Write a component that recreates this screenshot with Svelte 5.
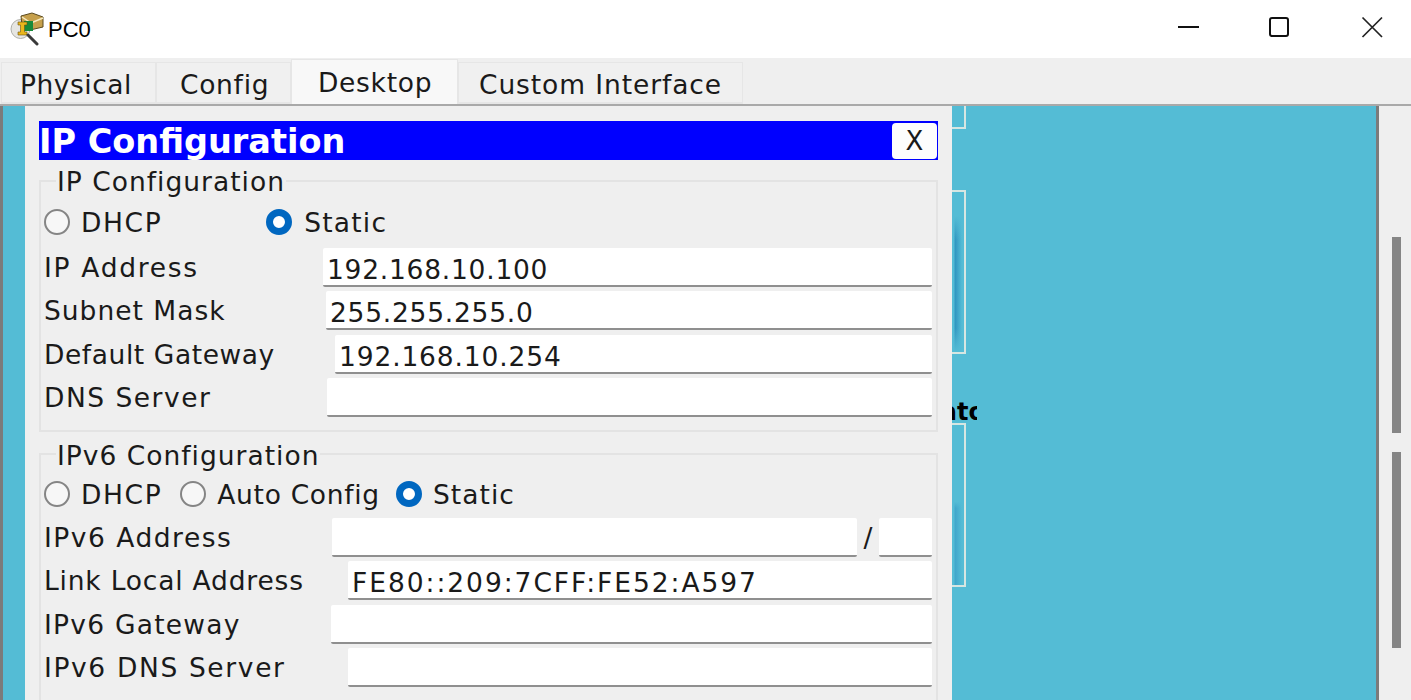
<script>
	// sp = letter spacing per text, the original UI font runs a bit differently per glyph
	const ipRows = [
		{ label: 'IP Address', sp: 1.7, value: '192.168.10.100', valueSp: 0.75, x: 323 },
		{ label: 'Subnet Mask', sp: 1.0, value: '255.255.255.0', valueSp: 0.75, x: 326 },
		{ label: 'Default Gateway', sp: 0.57, value: '192.168.10.254', valueSp: 0.85, x: 335 },
		{ label: 'DNS Server', sp: 1.5, value: '', valueSp: 0.9, x: 327 }
	];
	const v6Rows = [
		{ label: 'Link Local Address', sp: 0.8, value: 'FE80::209:7CFF:FE52:A597', valueSp: 1.95, x: 348 },
		{ label: 'IPv6 Gateway', sp: 1.23, value: '', valueSp: 0.9, x: 331 },
		{ label: 'IPv6 DNS Server', sp: 1.63, value: '', valueSp: 0.9, x: 348 }
	];
	const tabs = [
		{ name: 'Physical', width: 155, pad: 18, sp: 0.5 },
		{ name: 'Config', width: 135, pad: 23, sp: 0.7 },
		{ name: 'Desktop', width: 167, pad: 26, sp: 0.7 },
		{ name: 'Custom Interface', width: 285, pad: 20, sp: 0.9 }
	];
	// field offsets are measured from the window edge, the row starts at 44
	const labelWidth = (x) => `${x - 44}px`;
	const spacing = (n) => `${n}px`;
</script>

<div class="window">
	<header class="titlebar">
		<svg class="app-icon" width="34" height="34" viewBox="0 0 34 34">
			<circle cx="10.5" cy="17" r="9.5" fill="#e6e6e2" stroke="#b0b0aa" />
			<path d="M11 4 L22 1 L33 5 L33 15 L20 18 L12 14 Z" fill="#c6a04c" stroke="#5b4a1f" />
			<path d="M12 5 L21 11 L33 6" fill="none" stroke="#f6ebc2" stroke-width="1.5" />
			<rect x="14" y="9" width="9" height="10" fill="#178a3a" />
			<path d="M8 10 H17 V13 H14.5 V20 H17 V23 H8 V20 H10.5 V13 H8 Z" fill="#eab71b" stroke="#6a5210" stroke-width="0.6" />
			<path d="M18 23 L27 32" stroke="#3a3a3a" stroke-width="3" stroke-linecap="round" />
		</svg>
		<span class="title">PC0</span>
		<div class="controls">
			<svg class="min" width="22" height="22" viewBox="0 0 22 22"><path d="M1 11 H22" stroke="#111" stroke-width="2" /></svg>
			<svg width="22" height="22" viewBox="0 0 22 22"><rect x="2" y="2" width="18" height="18" rx="2" fill="none" stroke="#111" stroke-width="2" /></svg>
			<svg width="22" height="22" viewBox="0 0 22 22"><path d="M1.5 1.5 L21 21 M21 1.5 L1.5 21" stroke="#222" stroke-width="1.7" fill="none" /></svg>
		</div>
	</header>

	<nav class="tabs">
		{#each tabs as tab}
			<div
				class="tab"
				class:active={tab.name === 'Desktop'}
				style:width={`${tab.width}px`}
				style:padding-left={`${tab.pad}px`}
				style:letter-spacing={spacing(tab.sp)}
			>
				{tab.name}
			</div>
		{/each}
	</nav>

	<main class="body">
		<div class="edge"></div>
		<div class="sliver"></div>
		<section class="panel">
			<div class="heading">
				<span class="heading-text">IP Configuration</span>
				<button class="close">X</button>
			</div>

			<fieldset class="group first">
				<legend>IP Configuration</legend>
				<div class="radios">
					<span class="radio"></span><span class="radio-label dhcp wide">DHCP</span>
					<span class="radio on"></span><span class="radio-label">Static</span>
				</div>
				<div class="rows">
					{#each ipRows as row}
						<div class="row">
							<span class="label" style:width={labelWidth(row.x)} style:letter-spacing={spacing(row.sp)}>{row.label}</span>
							<input class="field" value={row.value} style:letter-spacing={spacing(row.valueSp)} readonly />
						</div>
					{/each}
				</div>
			</fieldset>

			<fieldset class="group second">
				<legend>IPv6 Configuration</legend>
				<div class="radios">
					<span class="radio"></span><span class="radio-label dhcp">DHCP</span>
					<span class="radio"></span><span class="radio-label auto">Auto Config</span>
					<span class="radio on"></span><span class="radio-label static6">Static</span>
				</div>
				<div class="rows">
					<div class="row">
						<span class="label" style:width={labelWidth(332)} style:letter-spacing={spacing(1.5)}>IPv6 Address</span>
						<input class="field" value="" readonly />
						<span class="slash">/</span>
						<input class="field prefix" value="" readonly />
					</div>
					{#each v6Rows as row}
						<div class="row">
							<span class="label" style:width={labelWidth(row.x)} style:letter-spacing={spacing(row.sp)}>{row.label}</span>
							<input class="field" value={row.value} style:letter-spacing={spacing(row.valueSp)} readonly />
						</div>
					{/each}
				</div>
			</fieldset>
		</section>

		<div class="desk">
			<div class="app-box one"></div>
			<div class="app-box two"></div>
			<div class="clip"><span class="app-name">ato</span></div>
			<div class="app-box three"></div>
		</div>
		<div class="divider"></div>
		<aside class="scroll">
			<div class="thumb upper"></div>
			<div class="thumb lower"></div>
		</aside>
	</main>
</div>

<style>
	:global(body) {
		margin: 0;
		overflow: hidden;
	}

	.window {
		width: 1411px;
		height: 700px;
		display: flex;
		flex-direction: column;
		overflow: hidden;
		background: #efefef;
		font-family: 'DejaVu Sans', sans-serif;
		color: #1a1a1a;
	}

	.titlebar {
		height: 58px;
		flex-shrink: 0;
		display: flex;
		align-items: center;
		padding-left: 10px;
		background: #ffffff;
	}

	.app-icon {
		margin-right: 4px;
	}

	.title {
		font-family: 'Liberation Sans', sans-serif;
		font-size: 22px;
		color: #000;
		margin-top: 2px;
	}

	.controls {
		margin-left: auto;
		align-self: flex-start;
		display: flex;
		gap: 71px;
		padding: 16px 28px 0 0;
	}

	.controls .min {
		margin-right: -2px;
	}

	.tabs {
		height: 48px;
		flex-shrink: 0;
		display: flex;
		align-items: flex-end;
		padding-left: 1px;
		background: #efefef;
		border-bottom: 2px solid #a9a9a9;
		box-sizing: border-box;
	}

	.tab {
		height: 42px;
		box-sizing: border-box;
		padding-top: 6px;
		font-size: 26.5px;
		line-height: 32px;
		background: #f0f0f0;
		border: 1px solid #e6e6e6;
		border-bottom: 2px solid #e6e6e6;
		white-space: nowrap;
	}

	.tab.active {
		height: 45px;
		padding-top: 7px;
		background: #f8f8f8;
		border-bottom: none;
	}

	.body {
		flex: 1;
		min-height: 0;
		display: flex;
	}

	.edge {
		width: 3px;
		background: #7b7b7b;
	}

	.sliver {
		width: 22px;
		background: #54bcd5;
	}

	.panel {
		width: 927px;
		flex-shrink: 0;
		box-sizing: border-box;
		padding: 15px 14px 0 14px;
		background: #efefef;
		display: flex;
		flex-direction: column;
	}

	.heading {
		height: 39px;
		flex-shrink: 0;
		display: flex;
		align-items: center;
		justify-content: space-between;
		background: #0000ff;
		color: #fff;
		font-size: 33.5px;
		font-weight: 700;
		padding-right: 1px;
	}

	.heading-text {
		padding-top: 2px;
	}

	.close {
		width: 45px;
		height: 36px;
		border: none;
		border-radius: 4px;
		background: #fdfdfd;
		color: #1a1a1a;
		font-family: inherit;
		font-size: 26px;
		padding: 0;
	}

	.group {
		margin: 0;
		padding: 0 4px 0 3px;
		border: 2px solid #e3e3e3;
		min-width: 0;
		box-sizing: border-box;
		flex-shrink: 0;
	}

	.group.first {
		margin-top: 4px;
		height: 268px;
	}

	.group.second {
		margin-top: 4px;
		height: 292px;
	}

	legend {
		margin-left: 12px;
		padding: 2px 1px 0;
		font-size: 26.5px;
		line-height: 32px;
		letter-spacing: 1px;
	}

	.second legend {
		padding-top: 4px;
	}

	.radios {
		display: flex;
		align-items: center;
		height: 42px;
		margin-top: 3px;
	}

	.second .radios {
		margin-top: 1px;
	}

	.radio {
		width: 26px;
		height: 26px;
		box-sizing: border-box;
		border: 2px solid #858585;
		border-radius: 50%;
		background: #f7f7f7;
		flex-shrink: 0;
	}

	.radio.on {
		border: 7.5px solid #0067c0;
		background: #fff;
	}

	.radio-label {
		font-size: 26.5px;
		letter-spacing: 1.2px;
		margin: 0 17px 0 12px;
	}

	.radio-label.dhcp {
		letter-spacing: 1.6px;
		margin: 0 18px 0 11px;
	}

	.radio-label.dhcp.wide {
		margin-right: 104px;
	}

	.radio-label.auto {
		letter-spacing: 0.7px;
		margin: 0 16px 0 11px;
	}

	.radio-label.static6 {
		letter-spacing: 1.05px;
		margin-left: 11px;
	}

	.rows {
		display: flex;
		flex-direction: column;
		gap: 4.33px;
		margin-top: 5px;
	}

	.second .rows {
		margin-top: 3px;
	}

	.row {
		display: flex;
		align-items: center;
		height: 39px;
	}

	.label {
		flex-shrink: 0;
		font-size: 26.5px;
		white-space: nowrap;
	}

	.field {
		flex: 1;
		min-width: 0;
		height: 39px;
		box-sizing: border-box;
		border: none;
		border-bottom: 2px solid #8f8f8f;
		border-radius: 2px;
		background: #fff;
		padding: 6px 4px 0;
		font-family: inherit;
		font-size: 26.5px;
		color: #1a1a1a;
		outline: none;
	}

	.slash {
		width: 22px;
		text-align: center;
		font-size: 26.5px;
		flex-shrink: 0;
	}

	.field.prefix {
		flex: 0 0 53px;
	}

	.desk {
		flex: 1;
		position: relative;
		overflow: hidden;
		background: #54bcd5;
	}

	/* bits of the desktop icons showing from behind the dialog */
	.app-box {
		position: absolute;
		left: -10px;
		width: 24px;
		border: 2px solid #d6e6e2;
		box-sizing: border-box;
	}

	.app-box.one {
		top: -20px;
		height: 43px;
	}

	.app-box.two {
		top: 84px;
		height: 164px;
		background: linear-gradient(180deg, #54bcd5 15%, transparent 30%, transparent 85%, #54bcd5),
			linear-gradient(90deg, #54bcd5 10px, #2f95c0 11px, #54bcd5 18px);
	}

	.app-box.three {
		top: 317px;
		height: 164px;
		background: linear-gradient(180deg, #54bcd5 48%, transparent 52%),
			linear-gradient(90deg, #54bcd5 10px, #3fa6cb 11px, #54bcd5 18px);
	}

	.clip {
		position: absolute;
		left: 0;
		top: 292px;
		width: 25px;
		height: 32px;
		overflow: hidden;
	}

	.app-name {
		position: absolute;
		right: -8px;
		top: 0;
		font-size: 24px;
		font-weight: 700;
		color: #000;
	}

	.divider {
		width: 3px;
		background: #7b7b7b;
	}

	.scroll {
		width: 32px;
		flex-shrink: 0;
		position: relative;
		background: #efefef;
	}

	.thumb {
		position: absolute;
		left: 13px;
		width: 9px;
		background: #858585;
	}

	.thumb.upper {
		top: 131px;
		height: 196px;
	}

	.thumb.lower {
		top: 346px;
		height: 196px;
	}
</style>
